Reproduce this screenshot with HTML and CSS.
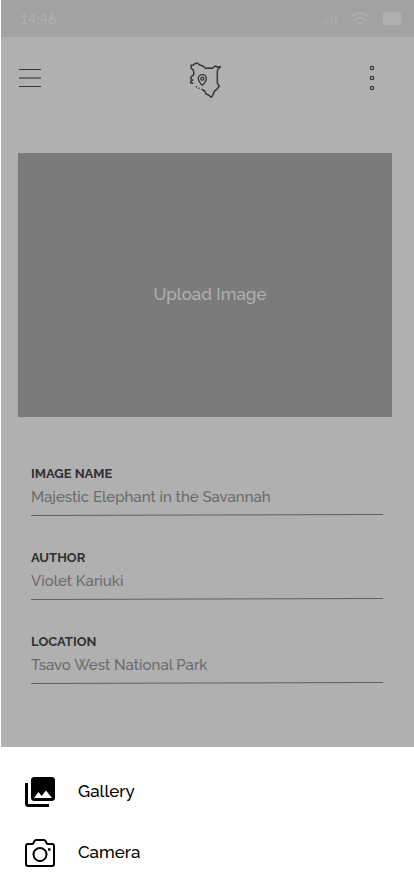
FILE: index.html
```html
<!DOCTYPE html>
<html lang="en">
<head>
<meta charset="utf-8">
<meta name="viewport" content="width=device-width, initial-scale=1">
<title>Upload Image</title>
<link rel="stylesheet" href="styles.css">
</head>
<body>
<div class="screen">
  <div class="page">
    <div class="status">
      <span class="time">14:46</span>
      <svg class="signal" width="14" height="12" viewBox="0 0 14 12" fill="currentColor" aria-hidden="true"><path d="M0 9h1.500v3H0zM4 6h1.500v6H4zM8 3h1.500v9H8zM12 0h1.500v12H12z"/></svg>
      <svg width="20" height="14" viewBox="0 0 20 14" fill="none" stroke="currentColor" stroke-width="1.3" aria-hidden="true"><path d="M1 5Q10-3 19 5M4 8.500Q10 3 16 8.500M7.500 12Q10 9.500 12.500 12"/></svg>
      <svg width="19" height="13" viewBox="0 0 19 13" fill="currentColor" aria-hidden="true"><rect width="18" height="13" rx="2"/><path d="M18 4q1 0 1 2.500T18 9z"/></svg>
    </div>
    <header class="header">
      <button class="icon-button" type="button" aria-label="Menu">
        <svg width="22" height="20" viewBox="0 0 22 20" fill="none" stroke="#383838" aria-hidden="true"><path d="M0 1.500h22M0 18.500h22"/><path d="M0 10h22" stroke="#6d6d6d" stroke-width="2"/></svg>
      </button>
      <svg class="logo" width="32" height="38" viewBox="60 48 96 114" fill="none" stroke="#363636" stroke-width="4.500" stroke-linecap="round" stroke-linejoin="round" aria-hidden="true">
        <path d="M96 133l8 5 4 9 8 3 7 7 5-5 5-13 6-5 9-10-6-10V78l2-5 7-8-9 1-7-3-8 7-11-1-9 1-10-8-8-2-7-6-8 2-4 4-7 1 1 9 6 6 2 9-3 7-5 2-2 7 6 4-5 3-2 5 7 2M79 125h.5M86 129.500h.5"/>
        <path d="M97 121q-12-12-12-20a12 12 0 0 1 24 0q0 8-12 20z" stroke-width="4"/><circle cx="97" cy="101" r="4.500" stroke-width="4"/>
      </svg>
      <button class="icon-button" type="button" aria-label="More options">
        <svg width="6" height="26" viewBox="0 0 6 26" fill="none" stroke="#333" stroke-width="1.200" aria-hidden="true"><circle cx="3" cy="3" r="1.700"/><circle cx="3" cy="13" r="1.700"/><circle cx="3" cy="23" r="1.700"/></svg>
      </button>
    </header>
    <button class="upload" type="button">Upload Image</button>
    <form class="fields">
      <div class="field">
        <label for="name">IMAGE NAME</label>
        <input id="name" type="text" value="Majestic Elephant in the Savannah">
        <svg class="rule" height="2" viewBox="0 0 352 2" preserveAspectRatio="none" aria-hidden="true"><path d="M0 1.500L352 .5"/></svg>
      </div>
      <div class="field">
        <label for="author">AUTHOR</label>
        <input id="author" type="text" value="Violet Kariuki">
        <svg class="rule" height="2" viewBox="0 0 352 2" preserveAspectRatio="none" aria-hidden="true"><path d="M0 1.500L352 .5"/></svg>
      </div>
      <div class="field">
        <label for="location">LOCATION</label>
        <input id="location" type="text" value="Tsavo West National Park">
        <svg class="rule" height="2" viewBox="0 0 352 2" preserveAspectRatio="none" aria-hidden="true"><path d="M0 1.500L352 .5"/></svg>
      </div>
    </form>
  </div>
  <div class="sheet">
    <button class="source" type="button">
      <svg width="30" height="30" viewBox="2 2 20 20" aria-hidden="true"><path d="M22 16V4c0-1.100-.9-2-2-2H8c-1.100 0-2 .9-2 2v12c0 1.100.9 2 2 2h12c1.100 0 2-.9 2-2zM11 12l2.030 2.710L16 11l4 5H8l3-4zM2 6v14c0 1.100.9 2 2 2h14v-2H4V6H2z"/></svg>
      <span>Gallery</span>
    </button>
    <button class="source" type="button">
      <svg width="30" height="30" viewBox="0 0 30 30" fill="none" stroke="#000" stroke-width="2" stroke-linejoin="round" aria-hidden="true"><path d="M3 6h4q1 0 1.500-1l1-2q.5-1 1.500-1h8q1 0 1.500 1l1 2q.5 1 1.500 1h4q2 0 2 2v18q0 2-2 2H3q-2 0-2-2V8q0-2 2-2z"/><circle cx="15" cy="16.500" r="6.500"/><path d="M23 11.500h2.500" stroke-width="2.500"/></svg>
      <span>Camera</span>
    </button>
  </div>
</div>
</body>
</html>
```
FILE: styles.css
```css
* {
  box-sizing: border-box;
}

body {
  margin: 0;
  background: #fff;
  font-family: Raleway, Lato, sans-serif;
  font-weight: 500;
}

button {
  border: 0;
  padding: 0;
  background: none;
  font: inherit;
  cursor: pointer;
}

.screen {
  display: flex;
  flex-direction: column;
  min-height: 100vh;
}

.page {
  margin-left: 1px;
  padding-bottom: 63px;
  background: #b0b0b0;
}

.status {
  display: flex;
  align-items: center;
  gap: 13px;
  height: 37px;
  padding: 0 12px 0 19px;
  background: #a2a2a2;
  color: #b0b0b0;
}

.time {
  margin-right: auto;
  font-family: Lato, sans-serif;
  font-size: 14px;
}

.signal {
  opacity: 0.7;
}

.header {
  display: grid;
  grid-template-columns: 1fr auto 1fr;
  align-items: center;
  height: 82px;
  padding: 0 39px 0 18px;
}

.logo {
  margin: 4px 0 0 18px;
}

.icon-button {
  display: flex;
  justify-self: start;
}

.icon-button:last-child {
  justify-self: end;
}

.upload {
  display: block;
  width: calc(100% - 39px);
  height: 264px;
  margin: 34px 22px 0 17px;
  padding: 18px 0 0 10px;
  background: #7b7b7b;
  color: #b0b0b0;
  font-size: 17px;
}

.fields {
  display: flex;
  flex-direction: column;
  gap: 33px;
  margin: 48px 31px 0 30px;
}

.field {
  display: flex;
  flex-direction: column;
}

.field label {
  color: #303030;
  font-size: 13px;
  font-weight: 700;
  line-height: 18px;
}

.field input {
  width: 100%;
  height: 28px;
  border: 0;
  padding: 0;
  background: none;
  color: #6b6b6b;
  font: inherit;
  font-size: 15px;
}

.rule {
  display: block;
  width: 100%;
  margin-top: 3px;
  stroke: #606060;
}

.sheet {
  display: flex;
  flex-direction: column;
  gap: 31px;
  padding: 30px 25px;
  background: #fff;
}

.source {
  display: flex;
  align-items: center;
  gap: 23px;
  height: 30px;
  color: #000;
  font-size: 17px;
}

.source span {
  padding-bottom: 2px;
}
```
